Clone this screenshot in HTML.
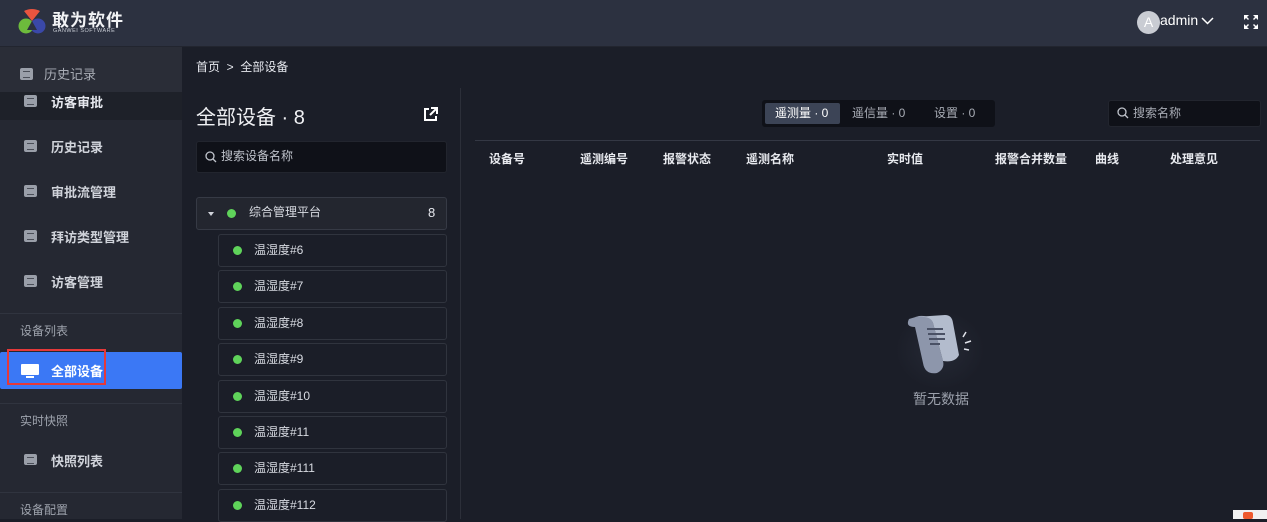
<!DOCTYPE html>
<html><head><meta charset="utf-8"><style>
*{margin:0;padding:0;box-sizing:border-box}
body{width:1267px;height:519px;overflow:hidden;background:#1b1e28;font-family:"Liberation Sans","Noto Sans CJK SC",sans-serif;color:#e6e8ee;position:relative;font-size:13px}
.abs{position:absolute}
.hdr{left:0;top:0;width:1267px;height:47px;background:#2c3140;border-bottom:1px solid #22252f}
.side{left:0;top:47px;width:182px;height:472px;background:#252832}
.si{position:absolute;left:0;width:182px;font-size:13px;font-weight:bold;color:#d0d3da}
.si .ic{position:absolute;left:24px;top:1px;width:13px;height:12px;background:#9a9fa9;border-radius:2px}
.si .ic:after{content:"";position:absolute;left:3px;top:3px;width:7px;height:5px;border-top:1.5px solid #4a4e58;border-bottom:1.5px solid #4a4e58}
.si span{position:absolute;left:51px;top:-2px}
.grp{position:absolute;left:20px;font-size:12px;color:#9ea3ad}
.div{position:absolute;left:0;width:182px;height:1px;background:#30343f}
.node{position:absolute;left:218px;width:229px;height:33px;border:1px solid #30343e;border-radius:3px;background:#1b1e28}
.dot{position:absolute;width:9px;height:9px;border-radius:50%;background:#5fd35a}
.node .dot{left:14px;top:11px}
.node span{position:absolute;left:35px;top:6px;font-size:12px;color:#d8dbe2}
.th{position:absolute;top:150px;font-size:12px;font-weight:bold;color:#e8eaef}
</style></head><body>
<div class="abs hdr">
 <svg class="abs" style="left:17px;top:8px" width="30" height="28" viewBox="0 0 30 28">
  <path d="M7 3 Q15 -1 23 3 L15 13 Z" fill="#e9543f"/>
  <circle cx="9" cy="18" r="7.5" fill="#6dbb3c"/>
  <circle cx="21" cy="18" r="7.5" fill="#3a48a8"/>
  <path d="M15 13 L10 22 L20 22Z" fill="#2c3140"/>
 </svg>
 <div class="abs" style="left:52px;top:6px;font-size:17px;font-weight:bold;color:#f2f3f5;letter-spacing:1px">敢为软件</div>
 <div class="abs" style="left:53px;top:28px;font-size:5.5px;color:#c8ccd4;letter-spacing:.5px">GANWEI SOFTWARE</div>
 <div class="abs" style="left:1137px;top:11px;width:23px;height:23px;border-radius:50%;background:#c9ccd3;color:#fff;font-size:14px;text-align:center;line-height:23px">A</div>
 <div class="abs" style="left:1160px;top:12px;font-size:14px;color:#fff">admin</div>
 <svg class="abs" style="left:1201px;top:17px" width="13" height="9"><path d="M1 1 L6.5 6.5 L12 1" stroke="#fff" stroke-width="1.5" fill="none"/></svg>
 <svg class="abs" style="left:1243px;top:14px" width="16" height="16" fill="#fff"><path d="M1 1h5l-2 2 2 2-1 1-2-2-2 2zM15 1h-5l2 2-2 2 1 1 2-2 2 2zM1 15h5l-2-2 2-2-1-1-2 2-2-2zM15 15h-5l2-2-2-2 1-1 2 2 2-2z"/></svg>
</div>
<div class="abs side">
 <div class="abs" style="left:0;top:0;width:182px;height:45px;background:#2a2d37"></div>
 <div class="abs" style="left:0;top:45px;width:182px;height:28px;background:#1e2129"></div>
</div>
<div class="si" style="top:66px;font-weight:normal;color:#a8acb5"><div class="ic" style="left:20px;top:2px"></div><span style="left:44px">历史记录</span></div>
<div class="si" style="top:94px;color:#e6e8ee"><div class="ic"></div><span>访客审批</span></div>
<div class="si" style="top:139px"><div class="ic"></div><span>历史记录</span></div>
<div class="si" style="top:184px"><div class="ic"></div><span>审批流管理</span></div>
<div class="si" style="top:229px"><div class="ic"></div><span>拜访类型管理</span></div>
<div class="si" style="top:274px"><div class="ic"></div><span>访客管理</span></div>
<div class="div" style="top:313px"></div>
<div class="grp" style="top:322px">设备列表</div>
<div class="abs" style="left:0;top:352px;width:182px;height:37px;background:#3b78f5;border-radius:2px"></div>
<div class="abs" style="left:7px;top:349px;width:99px;height:36px;border:2px solid #e5393a"></div>
<div class="abs" style="left:21px;top:364px;width:18px;height:11px;background:#fff;border-radius:1px"></div>
<div class="abs" style="left:26px;top:376px;width:8px;height:2px;background:#fff"></div>
<div class="si" style="top:363px;color:#fff"><span>全部设备</span></div>
<div class="div" style="top:403px"></div>
<div class="grp" style="top:412px">实时快照</div>
<div class="si" style="top:453px"><div class="ic" style="height:11px"></div><span>快照列表</span></div>
<div class="div" style="top:492px"></div>
<div class="grp" style="top:501px">设备配置</div>

<div class="abs" style="left:196px;top:58px;font-size:12px;color:#e6e8ee">首页 &nbsp;&gt;&nbsp; 全部设备</div>
<div class="abs" style="left:196px;top:101px;font-size:20px;color:#f0f1f4">全部设备 · 8</div>
<svg class="abs" style="left:423px;top:107px" width="15" height="15"><path d="M6 2H2v11h11V9" stroke="#fff" stroke-width="2" fill="none"/><path d="M8 1h6v6M14 1L7 8" stroke="#fff" stroke-width="2" fill="none"/></svg>
<div class="abs" style="left:196px;top:141px;width:251px;height:32px;background:#0f1118;border-radius:3px;border:1px solid #22252e"></div>
<svg class="abs" style="left:205px;top:151px" width="12" height="12"><circle cx="5" cy="5" r="4" stroke="#c0c4cc" stroke-width="1.3" fill="none"/><path d="M8 8l3 3" stroke="#c0c4cc" stroke-width="1.3"/></svg>
<div class="abs" style="left:221px;top:147px;font-size:12px;color:#bfc3cb">搜索设备名称</div>
<div class="abs" style="left:196px;top:197px;width:251px;height:33px;border:1px solid #363a45;border-radius:3px;background:#23262f"></div>
<div class="abs" style="left:208px;top:212px;border-left:3.5px solid transparent;border-right:3.5px solid transparent;border-top:4px solid #d0d3da"></div>
<div class="dot abs" style="left:227px;top:209px"></div>
<div class="abs" style="left:249px;top:203px;font-size:12px;color:#d8dbe2">综合管理平台</div>
<div class="abs" style="left:428px;top:205px;font-size:13px;color:#e6e8ee">8</div>
<div class="node" style="top:234px"><div class="dot"></div><span>温湿度#6</span></div>
<div class="node" style="top:270px"><div class="dot"></div><span>温湿度#7</span></div>
<div class="node" style="top:307px"><div class="dot"></div><span>温湿度#8</span></div>
<div class="node" style="top:343px"><div class="dot"></div><span>温湿度#9</span></div>
<div class="node" style="top:380px"><div class="dot"></div><span>温湿度#10</span></div>
<div class="node" style="top:416px"><div class="dot"></div><span>温湿度#11</span></div>
<div class="node" style="top:452px"><div class="dot"></div><span>温湿度#111</span></div>
<div class="node" style="top:489px"><div class="dot"></div><span>温湿度#112</span></div>
<div class="abs" style="left:460px;top:88px;width:1px;height:431px;background:#2c2f39"></div>

<div class="abs" style="left:762px;top:100px;width:233px;height:27px;background:#0f1118;border-radius:3px"></div>
<div class="abs" style="left:765px;top:103px;width:75px;height:21px;background:#3c4456;border-radius:2px"></div>
<div class="abs" style="left:775px;top:104px;font-size:12px;color:#fff">遥测量 · 0</div>
<div class="abs" style="left:852px;top:104px;font-size:12px;color:#a8acb5">遥信量 · 0</div>
<div class="abs" style="left:934px;top:104px;font-size:12px;color:#a8acb5">设置 · 0</div>
<div class="abs" style="left:1108px;top:100px;width:153px;height:27px;background:#0f1118;border-radius:3px;border:1px solid #22252e"></div>
<svg class="abs" style="left:1117px;top:107px" width="12" height="12"><circle cx="5" cy="5" r="4" stroke="#c0c4cc" stroke-width="1.3" fill="none"/><path d="M8 8l3 3" stroke="#c0c4cc" stroke-width="1.3"/></svg>
<div class="abs" style="left:1133px;top:104px;font-size:12px;color:#a8acb5">搜索名称</div>
<div class="abs" style="left:475px;top:140px;width:785px;height:1px;background:#343844"></div>
<div class="th" style="left:489px">设备号</div>
<div class="th" style="left:580px">遥测编号</div>
<div class="th" style="left:663px">报警状态</div>
<div class="th" style="left:746px">遥测名称</div>
<div class="th" style="left:887px">实时值</div>
<div class="th" style="left:995px">报警合并数量</div>
<div class="th" style="left:1095px">曲线</div>
<div class="th" style="left:1170px">处理意见</div>

<div class="abs" style="left:895px;top:310px;width:90px;height:80px;border-radius:50%;background:radial-gradient(#252935,transparent 70%)"></div>
<svg class="abs" style="left:905px;top:313px" width="70" height="70" viewBox="0 0 70 70">
 <path d="M4 6 Q0 14 10 14 L18 50 Q20 62 32 60 Q40 56 38 48 L28 10 Q26 2 14 3Z" fill="#8d96ab"/>
 <path d="M10 4 L40 2 Q47 2 48 10 L54 42 Q50 50 38 48 L28 10 Q26 3 14 4Z" fill="#b3bccd"/>
 <path d="M22 16h16M23 21h17M24 26h16M25 31h10" stroke="#4a5165" stroke-width="2"/>
 <path d="M58 24l3-5M60 30l6-2M59 36l5 1" stroke="#e0e3ea" stroke-width="1.5"/>
</svg>
<div class="abs" style="left:913px;top:389px;font-size:14px;color:#9ba0ab">暂无数据</div>
<div class="abs" style="left:1233px;top:510px;width:34px;height:9px;background:#f1f1f1"></div>
<div class="abs" style="left:1243px;top:512px;width:10px;height:7px;background:#ee5a2e;border-radius:2px"></div>
</body></html>
